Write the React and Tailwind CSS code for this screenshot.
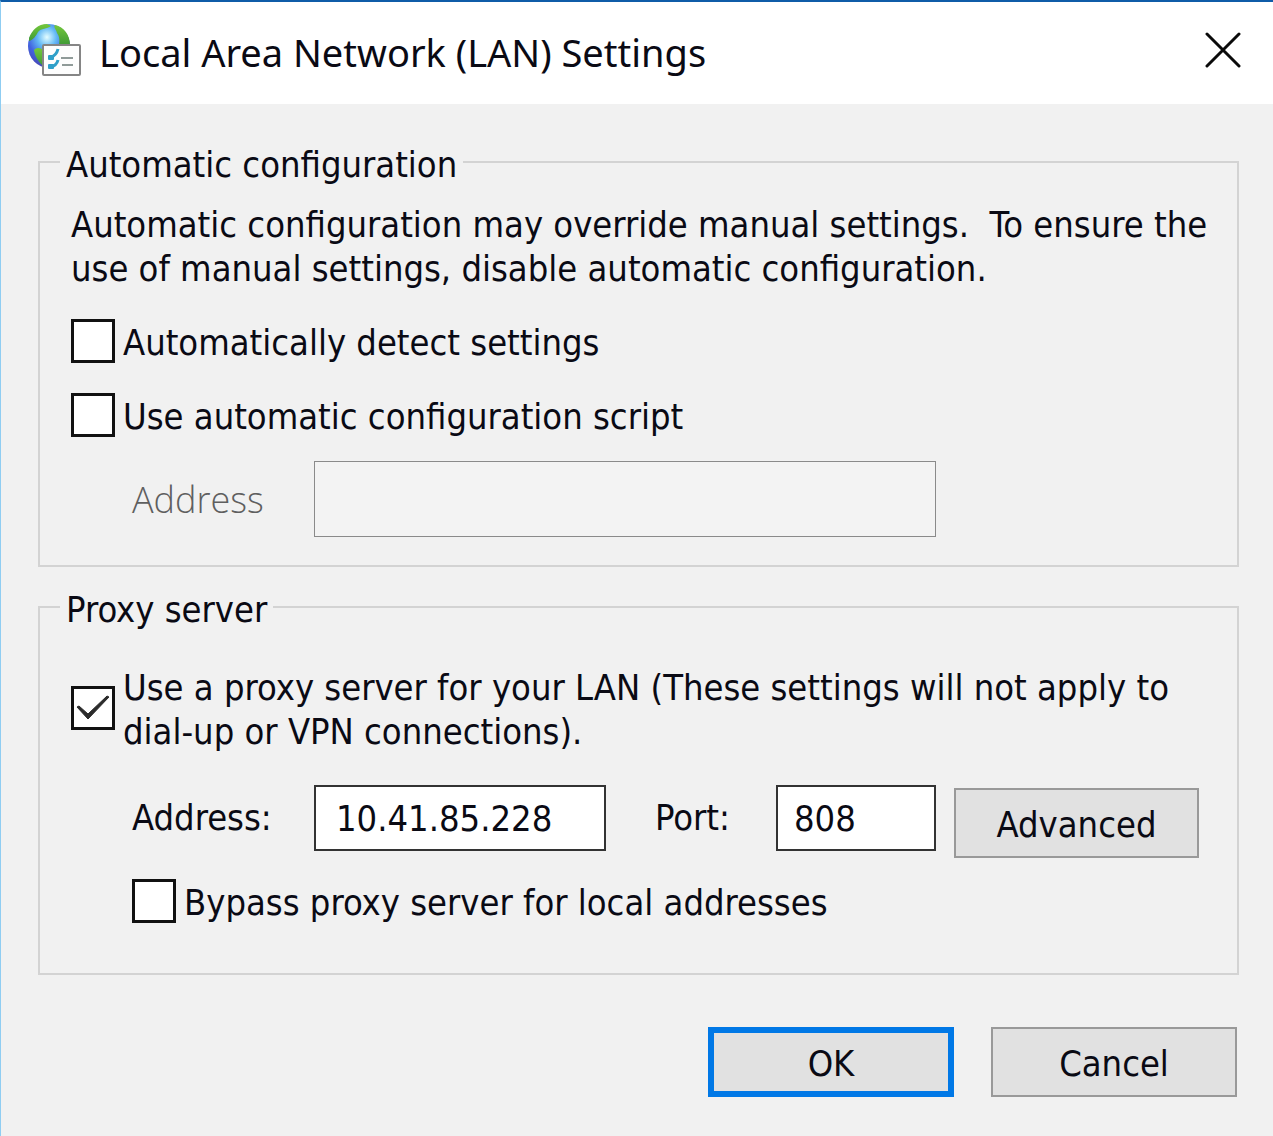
import { useState } from "react";

function NetworkIcon() {
    return (
        <svg viewBox="0 0 54 54" className="h-[54px] w-[54px] shrink-0" aria-hidden="true">
            <defs>
                <radialGradient id="ocean" cx="0.45" cy="0.3" r="0.75">
                    <stop offset="0" stopColor="#e4fdff" />
                    <stop offset="0.3" stopColor="#63b9f5" />
                    <stop offset="0.6" stopColor="#4263e0" />
                    <stop offset="1" stopColor="#4a3fa8" />
                </radialGradient>
                <linearGradient id="land" x1="0" y1="0" x2="0" y2="1">
                    <stop offset="0" stopColor="#74c83c" />
                    <stop offset="1" stopColor="#3f9a35" />
                </linearGradient>
            </defs>
            <ellipse cx="22" cy="23" rx="21" ry="22" fill="url(#ocean)" />
            <path d="M2 15C5 7 11 1 20 1L24 3C20 6 14 5 11 9C9 13 6 17 2 18Z" fill="url(#land)" />
            <path d="M28 2C37 4 43 12 43 22L32 22C33 16 32 13 30 10C29 6 26 4 28 2Z" fill="url(#land)" />
            <path d="M7 27C10 24 14 25 16 27V43C11 38 8 34 7 27Z" fill="url(#land)" />
            <rect x="16" y="22" width="37" height="30" rx="1" fill="#fdfdfd" stroke="#858585" strokeWidth="2" />
            <path d="M24 34C28 33 30 30 31 26M24 44C28 43 30 41 31 37" fill="none" stroke="#2f9fc9" strokeWidth="3" />
            <rect x="21" y="32" width="6" height="5" rx="1" fill="#2f9fc9" />
            <rect x="21" y="41" width="6" height="5" rx="1" fill="#2f9fc9" />
            <path d="M34 35h12M35 42h11" stroke="#8f9a98" strokeWidth="2" />
        </svg>
    );
}

function CheckOption({ id, checked, onChange, children }) {
    return (
        <div className="flex items-center gap-2">
            <span className="relative h-11 w-11 shrink-0">
                <input
                    id={id}
                    type="checkbox"
                    checked={checked}
                    onChange={(e) => onChange(e.target.checked)}
                    className="block h-11 w-11 appearance-none border-3 border-[#111] bg-white"
                />
                {checked && (
                    <svg viewBox="0 0 44 44" className="pointer-events-none absolute inset-0" aria-hidden="true">
                        <path d="M6 21L17 33L38 11L36 10L17 28L8 20Z" fill="#2b2b2b" stroke="#2b2b2b" strokeLinejoin="round" />
                    </svg>
                )}
            </span>
            <label htmlFor={id} className="pt-1">{children}</label>
        </div>
    );
}

function Group({ title, className, children }) {
    return (
        <fieldset className={`min-w-0 border-2 border-[#d3d3d3] px-5 ${className}`}>
            <legend className="px-[6px] pt-[6px] leading-10">{title}</legend>
            <div className="pl-[11px]">{children}</div>
        </fieldset>
    );
}

export default function App() {
    const [detect, setDetect] = useState(false);
    const [useScript, setUseScript] = useState(false);
    const [useProxy, setUseProxy] = useState(true);
    const [bypass, setBypass] = useState(false);
    const [address, setAddress] = useState("10.41.85.228");
    const [port, setPort] = useState("808");

    return (
        <div className="min-h-screen border-t-2 border-l border-t-[#0f5ca8] border-l-[#8fcdf2] bg-[#f1f1f1] text-[36px] leading-11 text-[#0a0a14] font-['DejaVu_Sans_Condensed','DejaVu_Sans',sans-serif]">
            <header className="flex h-[102px] items-center gap-[18px] bg-white pr-8 pb-[6px] pl-[26px]">
                <NetworkIcon />
                <h1 className="grow pt-1 whitespace-nowrap font-['Noto_Sans',sans-serif] text-[38px]">
                    Local Area Network (LAN) Settings
                </h1>
                <button type="button" aria-label="Close">
                    <svg viewBox="0 0 36 36" className="h-9 w-9">
                        <path d="M2 2L34 34M34 2L2 34" stroke="#0a0a0a" strokeWidth="3" strokeLinecap="round" />
                    </svg>
                </button>
            </header>

            <main className="pt-[35px] pr-[34px] pb-9 pl-[37px]">
                <Group title="Automatic configuration" className="pt-[18px] pb-7">
                    <p className="whitespace-pre-wrap">
                        {"Automatic configuration may override manual settings.  To ensure the use of manual settings, disable automatic configuration."}
                    </p>
                    <div className="mt-[26px] flex flex-col gap-[26px]">
                        <CheckOption id="detect" checked={detect} onChange={setDetect}>
                            Automatically detect settings
                        </CheckOption>
                        <CheckOption id="script" checked={useScript} onChange={setUseScript}>
                            Use automatic configuration script
                        </CheckOption>
                    </div>
                    <div className="mt-[22px] mr-[281px] ml-[61px] flex items-center">
                        <label
                            htmlFor="script-address"
                            className="w-[182px] shrink-0 pt-[2px] font-['Open_Sans',sans-serif] text-[36px] font-light text-[#5f5f5f]"
                        >
                            Address
                        </label>
                        <input
                            id="script-address"
                            type="text"
                            disabled={!useScript}
                            className="h-[76px] min-w-0 grow border border-[#8a8a8a] bg-[#f3f3f3] px-5"
                        />
                    </div>
                </Group>

                <Group title="Proxy server" className="mt-[17px] pt-8 pb-12">
                    <CheckOption id="proxy" checked={useProxy} onChange={setUseProxy}>
                        Use a proxy server for your LAN (These settings will not apply to dial-up or VPN connections).
                    </CheckOption>
                    <div className="mt-[31px] mr-[18px] ml-[61px] flex items-start">
                        <label htmlFor="address" className="w-[182px] shrink-0 leading-[66px]">
                            Address:
                        </label>
                        <input
                            id="address"
                            type="text"
                            value={address}
                            onChange={(e) => setAddress(e.target.value)}
                            className="h-[66px] min-w-0 grow border-2 border-[#333] bg-white px-5"
                        />
                        <label htmlFor="port" className="ml-[49px] w-[121px] shrink-0 leading-[66px]">
                            Port:
                        </label>
                        <input
                            id="port"
                            type="text"
                            value={port}
                            onChange={(e) => setPort(e.target.value)}
                            className="h-[66px] w-40 shrink-0 border-2 border-[#333] bg-white px-4"
                        />
                        <button type="button" className="mt-[3px] ml-[18px] h-[70px] w-[245px] shrink-0 border-2 border-[#999] bg-[#e1e1e1] pt-1">
                            Advanced
                        </button>
                    </div>
                    <div className="mt-[19px] ml-[61px]">
                        <CheckOption id="bypass" checked={bypass} onChange={setBypass}>
                            Bypass proxy server for local addresses
                        </CheckOption>
                    </div>
                </Group>

                <div className="mt-[52px] mr-[2px] flex justify-end gap-[37px]">
                    <button type="button" className="h-[70px] w-[246px] border-6 border-[#0078e6] bg-[#e1e1e1] pt-1">
                        OK
                    </button>
                    <button type="button" className="h-[70px] w-[246px] border-2 border-[#999] bg-[#e1e1e1] pt-1">
                        Cancel
                    </button>
                </div>
            </main>
        </div>
    );
}
